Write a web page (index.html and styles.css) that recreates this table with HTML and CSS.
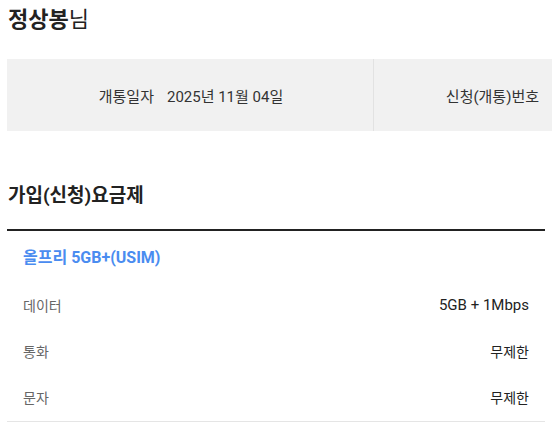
FILE: index.html
```html
<!DOCTYPE html>
<html lang="ko">
<head>
<meta charset="utf-8">
<link rel="stylesheet" href="styles.css">
</head>
<body>
<div class="page">
  <h1 class="name"><strong>정상봉</strong>님</h1>
  <div class="info-wrap">
    <div class="info">
      <div class="cell"><span class="label">개통일자</span><span>2025년 11월 04일</span></div>
      <div class="cell cell-right">신청(개통)번호</div>
    </div>
  </div>
  <h2 class="section">가입(신청)요금제</h2>
  <div class="plan">
    <div class="plan-name">올프리 5GB+(USIM)</div>
    <div class="rows">
      <div class="row"><span class="k">데이터</span><span class="v">5GB + 1Mbps</span></div>
      <div class="row"><span class="k">통화</span><span class="v">무제한</span></div>
      <div class="row"><span class="k">문자</span><span class="v">무제한</span></div>
    </div>
  </div>
</div>
</body>
</html>
```
FILE: styles.css
```css
html, body {
  margin: 0;
  padding: 0;
  background: #fff;
  overflow: hidden;
}
body {
  font-family: Roboto, "Noto Sans CJK KR", sans-serif;
  color: #222;
}
.page {
  padding: 0 7px;
}
.name {
  margin: 0;
  padding: 4px 0 0 1px;
  font-size: 22px;
  line-height: 32px;
  font-weight: 400;
  color: #222;
}
.name strong {
  font-weight: 700;
}
.info-wrap {
  margin-top: 23px;
  margin-right: -7px;
  overflow: hidden;
}
.info {
  display: grid;
  grid-template-columns: 366px 1fr;
  background: #f1f1f1;
  height: 72px;
}
.cell {
  display: flex;
  align-items: center;
  justify-content: center;
  gap: 13px;
  font-size: 15px;
  color: #333;
  padding-left: 2px;
}
.cell-right {
  border-left: 1px solid #e2e2e2;
  justify-content: flex-end;
  padding-right: 13px;
}
.section {
  margin: 51px 0 0 1px;
  font-size: 19px;
  line-height: 28px;
  font-weight: 700;
  color: #222;
}
.plan {
  margin-top: 19px;
  border-top: 2px solid #222;
  border-bottom: 1px solid #e5e5e5;
}
.plan-name {
  padding: 15px 16px 0;
  font-size: 16px;
  line-height: 24px;
  font-weight: 700;
  color: #4a8cf0;
}
.rows {
  padding: 12px 0 1px;
}
.row {
  display: flex;
  justify-content: space-between;
  align-items: center;
  padding: 0 16px;
  height: 46px;
  font-size: 14px;
}
.k {
  color: #666;
}
.v {
  color: #222;
}
.row:first-child .v {
  font-size: 15px;
}
```
